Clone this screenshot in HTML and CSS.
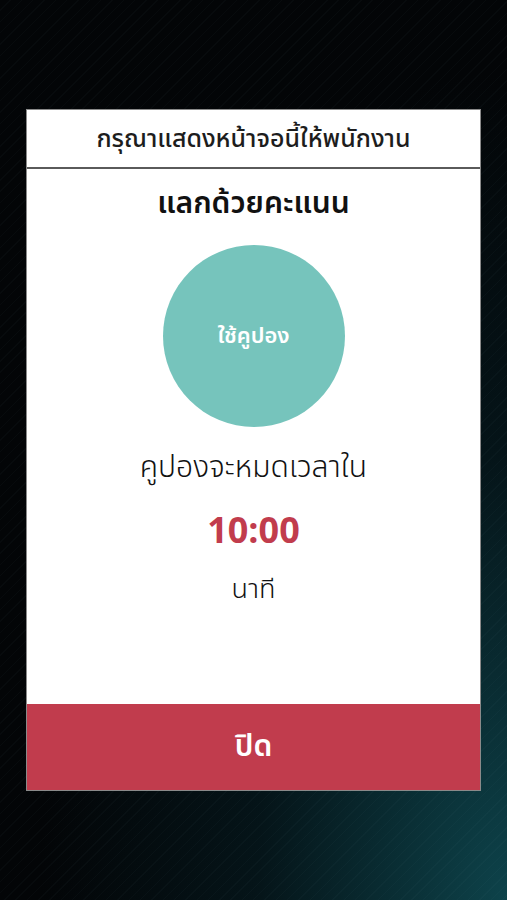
FILE: index.html
```html
<!DOCTYPE html>
<html lang="th">
<head>
  <meta charset="UTF-8">
  <title>แลกด้วยคะแนน</title>
  <link rel="stylesheet" href="styles.css">
</head>
<body>

  <div class="screen">
    <div id="coupon">
      <div class="coupon-header">กรุณาแสดงหน้าจอนี้ให้พนักงาน</div>

      <div class="coupon-body">
        <h2 class="coupon-title">แลกด้วยคะแนน</h2>
        <div class="use-circle">ใช้คูปอง</div>
        <p class="expire-text">คูปองจะหมดเวลาใน</p>
        <p class="timer" id="timer">10:00</p>
        <p class="unit">นาที</p>
      </div>

      <button type="button" class="close-btn">ปิด</button>
    </div>
  </div>

</body>
</html>
```

FILE: styles.css
```css
body {
  margin: 0;
  font-family: "Noto Sans Thai", "Noto Sans", "DejaVu Sans", sans-serif;
  background: #030507;
}

.screen {
  height: 900px;
  padding-top: 109px;
  box-sizing: border-box;
  background:
    repeating-linear-gradient(135deg, transparent 0 7px, rgba(120,160,170,0.035) 7px 8px),
    radial-gradient(ellipse at 100% 100%, rgba(14,70,78,0.95) 0%, rgba(6,30,36,0.6) 35%, rgba(3,5,7,0) 65%),
    #030507;
}

#coupon {
  width: 455px;
  height: 682px;
  margin: 0 auto;
  background: white;
  border: 1px solid #8a8a8a;
  box-sizing: border-box;
  display: flex;
  flex-direction: column;
}

.coupon-header {
  height: 57px;
  border-bottom: 2px solid #5a5a5a;
  display: flex;
  justify-content: center;
  align-items: center;
  font-size: 25px;
  font-weight: 500;
  color: #1d1d1d;
}

.coupon-body {
  flex: 1;
  display: flex;
  flex-direction: column;
  align-items: center;
  padding-top: 15px;
}

.coupon-title {
  margin: 0;
  font-size: 30px;
  line-height: 40px;
  font-weight: 600;
  color: #111;
}

.use-circle {
  width: 182px;
  height: 182px;
  margin-top: 21px;
  border-radius: 50%;
  background: #76c4bc;
  color: white;
  font-size: 22px;
  font-weight: 600;
  display: flex;
  justify-content: center;
  align-items: center;
}

.expire-text {
  margin: 19px 0 0;
  font-size: 30px;
  line-height: 44px;
  font-weight: 300;
  color: #111;
}

.timer {
  margin: 18px 0 0;
  font-size: 36px;
  line-height: 48px;
  font-weight: 700;
  color: #c13c4d;
}

.unit {
  margin: 14px 0 0;
  font-size: 27px;
  line-height: 40px;
  font-weight: 300;
  color: #111;
}

.close-btn {
  height: 86px;
  border: none;
  background: #c13c4d;
  color: white;
  font-family: inherit;
  font-size: 30px;
  font-weight: 600;
  cursor: pointer;
}
```
